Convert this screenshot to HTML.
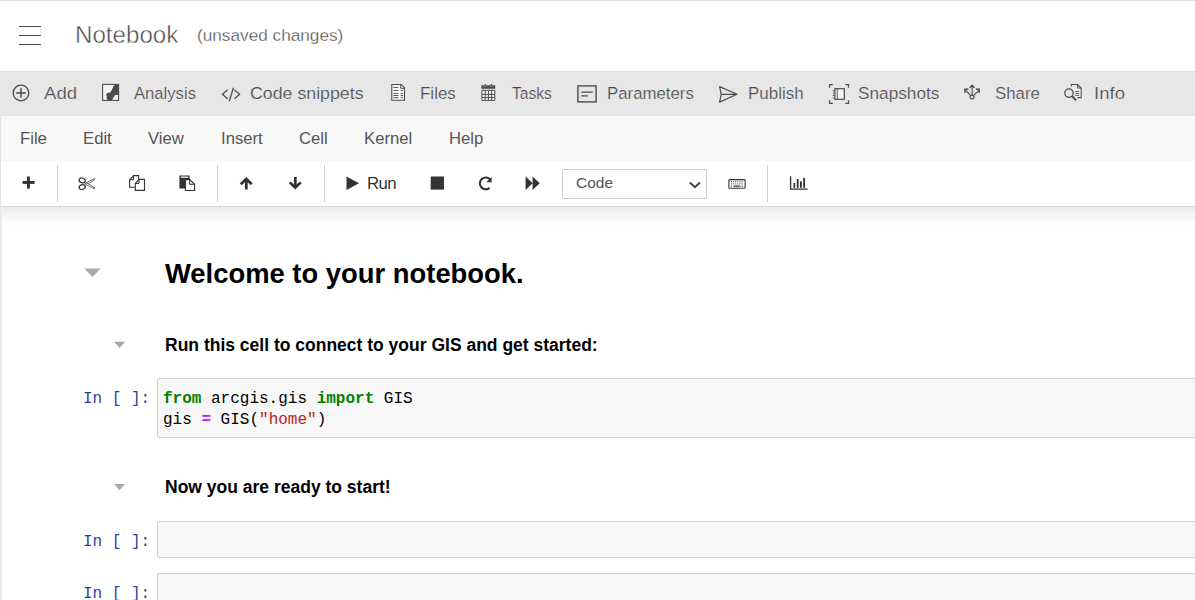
<!DOCTYPE html>
<html><head><meta charset="utf-8">
<style>
*{box-sizing:border-box}
html,body{margin:0;padding:0}
body{width:1195px;height:600px;overflow:hidden;position:relative;background:#fff;font-family:"Liberation Sans",sans-serif}
.a{position:absolute;white-space:pre;line-height:1}
svg{position:absolute;overflow:visible}
#topline{position:absolute;left:0;top:0;width:1195px;height:1px;background:#dcdcdc}
.ham{position:absolute;left:19px;width:22px;height:1.3px;background:#484848}
#nbtitle{left:75px;top:24px;font-size:23px;color:#4a4a4a;-webkit-text-stroke:0.45px #fff;transform:scaleX(1.05);transform-origin:0 0}
#unsaved{left:197px;top:26.5px;font-size:16px;color:#4a4a4a;-webkit-text-stroke:0.3px #fff;transform:scale(1.075,1.06);transform-origin:0 0}
#band{position:absolute;left:0;top:71px;width:1195px;height:45px;background:#e7e7e7;border-top:1px solid #dedede}
.bt{top:85px;font-size:16px;color:#4a4a4a;-webkit-text-stroke:0.2px #e7e7e7;transform-origin:0 0}
#menubar{position:absolute;left:0;top:116px;width:1195px;height:45px;background:#f8f8f8;border-left:1px solid #e3e3e3}
.mt{top:131px;font-size:16.7px;color:#555}
#toolbar{position:absolute;left:0;top:161px;width:1195px;height:45px;background:#fff;border-left:1px solid #e3e3e3}
#tbline{position:absolute;left:0;top:206px;width:1195px;height:1px;background:#d9d9d9}
#shadow{position:absolute;left:0;top:207px;width:1195px;height:18px;background:linear-gradient(#ececec,#fff)}
#leftb{position:absolute;left:0;top:207px;width:2px;height:393px;background:linear-gradient(90deg,#e3e3e3,#f4f4f4)}
.sep{position:absolute;top:165px;width:1px;height:37px;background:#d0d0d0}
.h{color:#000;font-weight:bold}
.cell{position:absolute;left:157px;width:1060px;background:#f7f7f7;border:1px solid #cfcfcf;border-radius:2px}
.prompt{font-family:"Liberation Mono",monospace;font-size:16px;color:#303f9f}
.code{font-family:"Liberation Mono",monospace;font-size:16px;color:#000}
.tri{position:absolute;width:0;height:0;border-left:8px solid transparent;border-right:8px solid transparent;border-top:9px solid #a8a8a8}
</style></head><body>
<div id="topline"></div>
<div class="ham" style="top:26px"></div>
<div class="ham" style="top:35px"></div>
<div class="ham" style="top:44px"></div>
<span class="a" id="nbtitle">Notebook</span>
<span class="a" id="unsaved">(unsaved changes)</span>

<div id="band"></div>
<span class="a bt" style="left:44px;transform:scale(1.16,1.06)">Add</span>
<span class="a bt" style="left:133.6px;transform:scale(1.04,1.06)">Analysis</span>
<span class="a bt" style="left:250.4px;transform:scale(1.11,1.06)">Code snippets</span>
<span class="a bt" style="left:420px;transform:scale(1.06,1.06)">Files</span>
<span class="a bt" style="left:511.6px;transform:scale(0.976,1.06)">Tasks</span>
<span class="a bt" style="left:607px;transform:scale(1.05,1.06)">Parameters</span>
<span class="a bt" style="left:748.4px;transform:scale(1.06,1.06)">Publish</span>
<span class="a bt" style="left:858.4px;transform:scale(1.076,1.06)">Snapshots</span>
<span class="a bt" style="left:995px;transform:scale(1.05,1.06)">Share</span>
<span class="a bt" style="left:1094px;transform:scale(1.16,1.06)">Info</span>

<div id="menubar"></div>
<span class="a mt" style="left:20px">File</span>
<span class="a mt" style="left:83px">Edit</span>
<span class="a mt" style="left:148px">View</span>
<span class="a mt" style="left:221px">Insert</span>
<span class="a mt" style="left:299px">Cell</span>
<span class="a mt" style="left:364px">Kernel</span>
<span class="a mt" style="left:449px">Help</span>

<div id="toolbar"></div>
<div id="tbline"></div>
<div id="shadow"></div>
<div id="leftb"></div>
<div class="sep" style="left:57px"></div>
<div class="sep" style="left:217px"></div>
<div class="sep" style="left:324px"></div>
<div class="sep" style="left:767px"></div>
<div style="position:absolute;left:562px;top:169px;width:145px;height:30px;border:1px solid #c9c9c9;border-radius:2px;background:#fff"></div>
<span class="a" style="left:576px;top:175.2px;font-size:15.5px;color:#555">Code</span>
<span class="a" style="left:367px;top:176px;font-size:16.7px;color:#333;letter-spacing:-0.5px">Run</span>


<svg width="1195" height="600" style="left:0;top:0">
<g fill="none" stroke="#4c4c4c" stroke-width="1.2">
 <!-- add -->
 <circle cx="21" cy="93" r="7.8" stroke-width="1.3"/>
 <path d="M16.2 93H25.8M21 88.2V97.8" stroke-width="1.5"/>
 <!-- analysis -->
 <rect x="102.6" y="84.4" width="16" height="16" stroke-width="1.1" fill="#f4f4f4"/>
 <!-- code -->
 <path d="M227.6 89.8L222.4 94.3L227.6 98.8M233.4 87.8L229.2 101.2M234.4 89.8L239.6 94.3L234.4 98.8" stroke-width="1.25"/>
 <!-- files -->
 <path d="M391.8 84.5H401.3L404.5 87.7V100.2H391.8Z" stroke-width="1.1" fill="#f6f6f6"/>
 <path d="M400.7 84.5V88.3H404.5" stroke-width="1"/>
 <path d="M393.4 87.5H398.3M393.4 90.5H398.3M400.6 90.5H403M393.4 93.5H398.3M400.6 93.5H403M393.4 95.5H398.3M400.6 95.5H403M393.4 97.6H398.3M400.6 97.6H403" stroke-width="0.9"/>
 <!-- params -->
 <rect x="577.9" y="85.9" width="18.2" height="16" stroke-width="1.4"/>
 <path d="M581.2 92.1H592.8M581.2 95.8H587.8" stroke-width="1.3"/>
 <!-- publish -->
 <path d="M719.6 86.6L737 94.3L719.6 102.1L721.2 94.3ZM721.2 94.3H737" stroke-width="1.2" stroke-linejoin="round"/>
 <!-- snapshots -->
 <path d="M829.6 87.8V84.6H832.8M845.3 84.6H848.5V87.8M829.6 100.2V103.4H832.8M845.3 103.4H848.5V100.2" stroke-width="1.3"/>
 <rect x="834.9" y="88.7" width="9.4" height="10.6" stroke-width="1.2" fill="#f6f6f6"/>
 <path d="M837.3 88.7V99.3" stroke-width="1.1" stroke="#666"/>
 <path d="M832.8 90.6H834.5M832.8 93H834.5M832.8 95.5H834.5M832.8 98H834.5" stroke-width="0.9"/>
 <!-- share -->
 <circle cx="972.1" cy="97.1" r="1.9" stroke-width="1.2"/>
 <path d="M972.1 95.2V85.5M971 95.8L965.2 90M973.2 95.8L979.4 90" stroke-width="1.1"/>
 <path d="M969.7 87.7L972.1 85.2L974.5 87.7M968.4 89.3H964.9V92.8M975.8 89.3H979.3V92.8" stroke-width="1.4"/>
 <!-- info -->
 <circle cx="1069" cy="93.1" r="4.2" stroke-width="1.3"/>
 <path d="M1072.1 96.3L1076.2 100.3" stroke-width="1.9"/>
 <path d="M1073.5 89.2H1081.2V97.6H1075.5Z" fill="#f4f4f4" stroke="none"/><path d="M1071.3 86.6V84.5H1077.6L1081.2 88.1V97.6H1077.5" stroke-width="1.1"/>
 <path d="M1077.6 84.5V88.1H1081.2" stroke-width="0.9"/>
 <path d="M1075.2 91.4H1079.2M1075.2 93.4H1079.2M1075.2 95.4H1079.2" stroke-width="0.9"/>
</g>
<g fill="#4c4c4c" stroke="none">
 <!-- analysis fill -->
 <path d="M114.4 84.8H118.6V95H115.5L114.6 95.6L112.4 99.2V100.4H107.8L107.2 99L106.3 97.5L107 96.5L106.2 95L106.4 93.6L108.2 92.8L110.3 92.5L111.5 90.5L112.6 88.2L113.3 86.4Z"/>
 <!-- share heads -->

 <!-- tasks -->
 <path d="M481.4 85.2H484.6V86.5H486V85.2H490.6V86.5H492V85.2H495.2V88.8H481.4Z"/>
 <rect x="484.6" y="84" width="1.4" height="2.2"/>
 <rect x="490.6" y="84" width="1.4" height="2.2"/>
</g>
<g fill="none" stroke="#4c4c4c" stroke-width="1">
 <rect x="481.9" y="90.3" width="12.9" height="10.1" fill="#f6f6f6" stroke="none"/><path d="M481.9 90.3V100.4H494.8V90.3ZM485.2 90.3V100.4M488.4 90.3V100.4M491.6 90.3V100.4M481.9 94.4H494.8M481.9 97.5H494.8"/>
</g>
<!-- toolbar icons -->
<g fill="#333" stroke="none">
 <rect x="22.5" y="181" width="12.1" height="2.9"/>
 <rect x="27" y="176.5" width="2.9" height="12.1"/>
 <path d="M246.3 177L252.7 183.3L250.8 185.2L247.7 182.2V189.6H244.9V182.2L241.7 185.2L239.8 183.3Z"/>
 <path d="M295.3 189.6L301.7 183.3L299.8 181.4L296.7 184.4V177H293.9V184.4L290.7 181.4L288.8 183.3Z"/>
 <path d="M346.5 176.4L359.1 183.2L346.5 190Z"/>
 <rect x="430.7" y="176.5" width="13.3" height="13.1"/>
 <path d="M525.6 176.4L532.6 183.2L525.6 190ZM532.6 176.4L539.7 183.2L532.6 190Z"/>
 <rect x="793.5" y="183" width="1.7" height="4.8"/>
 <rect x="796.8" y="179" width="1.8" height="8.8"/>
 <rect x="800" y="181.3" width="1.8" height="6.5"/>
 <rect x="803.2" y="177.8" width="1.8" height="10"/>
 <!-- paste -->
 <path d="M179.4 175.4H189.6V180.2H185.2V188.6H179.4Z"/>
 <rect x="180.8" y="176.4" width="7.4" height="1.6" fill="#d8d8d8"/>
</g>
<g fill="none" stroke="#333">
 <!-- scissors -->
 <ellipse cx="82.2" cy="180.4" rx="3.1" ry="2.3" stroke-width="1.25" transform="rotate(20 82.2 180.4)"/>
 <ellipse cx="82.2" cy="187.1" rx="3.1" ry="2.3" stroke-width="1.25" transform="rotate(-20 82.2 187.1)"/>
 <path d="M85.2 183.2L94.8 178.6L94.2 180.2L86.6 184.6Z" stroke-width="0.7" fill="#fff" stroke-linejoin="round"/>
 <path d="M85.2 184.3L94.8 188.9L94.2 187.3L86.6 182.9Z" stroke-width="0.7" fill="#fff" stroke-linejoin="round"/>
 <!-- copy -->
 <path d="M134.8 187.3H129.6V179.8L133.6 175.6H138.6V179.5" stroke-width="1.1"/>
 <path d="M129.6 179.8H133.6V175.6" stroke-width="1"/>
 <path d="M135.3 190.4V183.4L139 179.4H144.5V190.4Z" stroke-width="1.1"/>
 <path d="M135.3 183.4H139V179.4" stroke-width="1"/>
 <!-- paste page -->
 <path d="M185.4 190.5V179.6H189.6L194.6 184.3V190.5Z" stroke-width="1.1" fill="#fff"/>
 <path d="M189.6 179.6V184.3H194.6" stroke-width="1"/>
 <!-- refresh -->
 <path d="M490.3 179.7A5.9 5.9 0 1 0 489.6 187.9" stroke-width="2.1"/>
 <!-- keyboard -->
 <rect x="728.9" y="179.6" width="16.2" height="8.6" rx="0.8" stroke-width="1.1"/>
 <path d="M731 181.7H743M731 183.9H743M731 186.2H732.2M733.6 186.2H740.4M741.8 186.2H743" stroke-width="1" stroke-dasharray="1 1.1"/>
 <path d="M733.6 186.2H740.4" stroke-width="1"/>
 <!-- chart axes -->
 <path d="M790.6 176.3V189.2H807.6" stroke-width="1.3"/>
 <!-- chevron -->
 <path d="M689.8 182.4L694.9 187.2L700 182.4" stroke-width="2" stroke="#444"/>
</g>
<g fill="#333"><path d="M491.6 176.9V182.3H486.2Z"/></g>

</svg>

<!-- notebook -->
<svg width="1195" height="600" style="left:0;top:0"><g fill="#aaa">
<path d="M84.4 268.4H100.6L92.5 276.9Z"/>
<path d="M114 341.8H125.1L119.55 348.1Z"/>
<path d="M114 484H125L119.5 490.2Z"/>
</g></svg>

<span class="a h" style="left:165px;top:260px;font-size:27.4px">Welcome to your notebook.</span>
<span class="a h" style="left:165px;top:337px;font-size:17.5px">Run this cell to connect to your GIS and get started:</span>
<span class="a prompt" style="left:83px;top:391px">In [ ]:</span>
<div class="cell" style="top:378px;height:60px"></div>
<span class="a code" style="left:163px;top:391px"><b style="color:#008000">from</b> arcgis.gis <b style="color:#008000">import</b> GIS</span>
<span class="a code" style="left:163px;top:412px">gis <b style="color:#aa22ff">=</b> GIS(<span style="color:#ba2121">"home"</span>)</span>

<span class="a h" style="left:165px;top:479px;font-size:17.5px">Now you are ready to start!</span>
<span class="a prompt" style="left:83px;top:534px">In [ ]:</span>
<div class="cell" style="top:521px;height:37px"></div>
<span class="a prompt" style="left:83px;top:586px">In [ ]:</span>
<div class="cell" style="top:573px;height:37px"></div>
</body></html>
